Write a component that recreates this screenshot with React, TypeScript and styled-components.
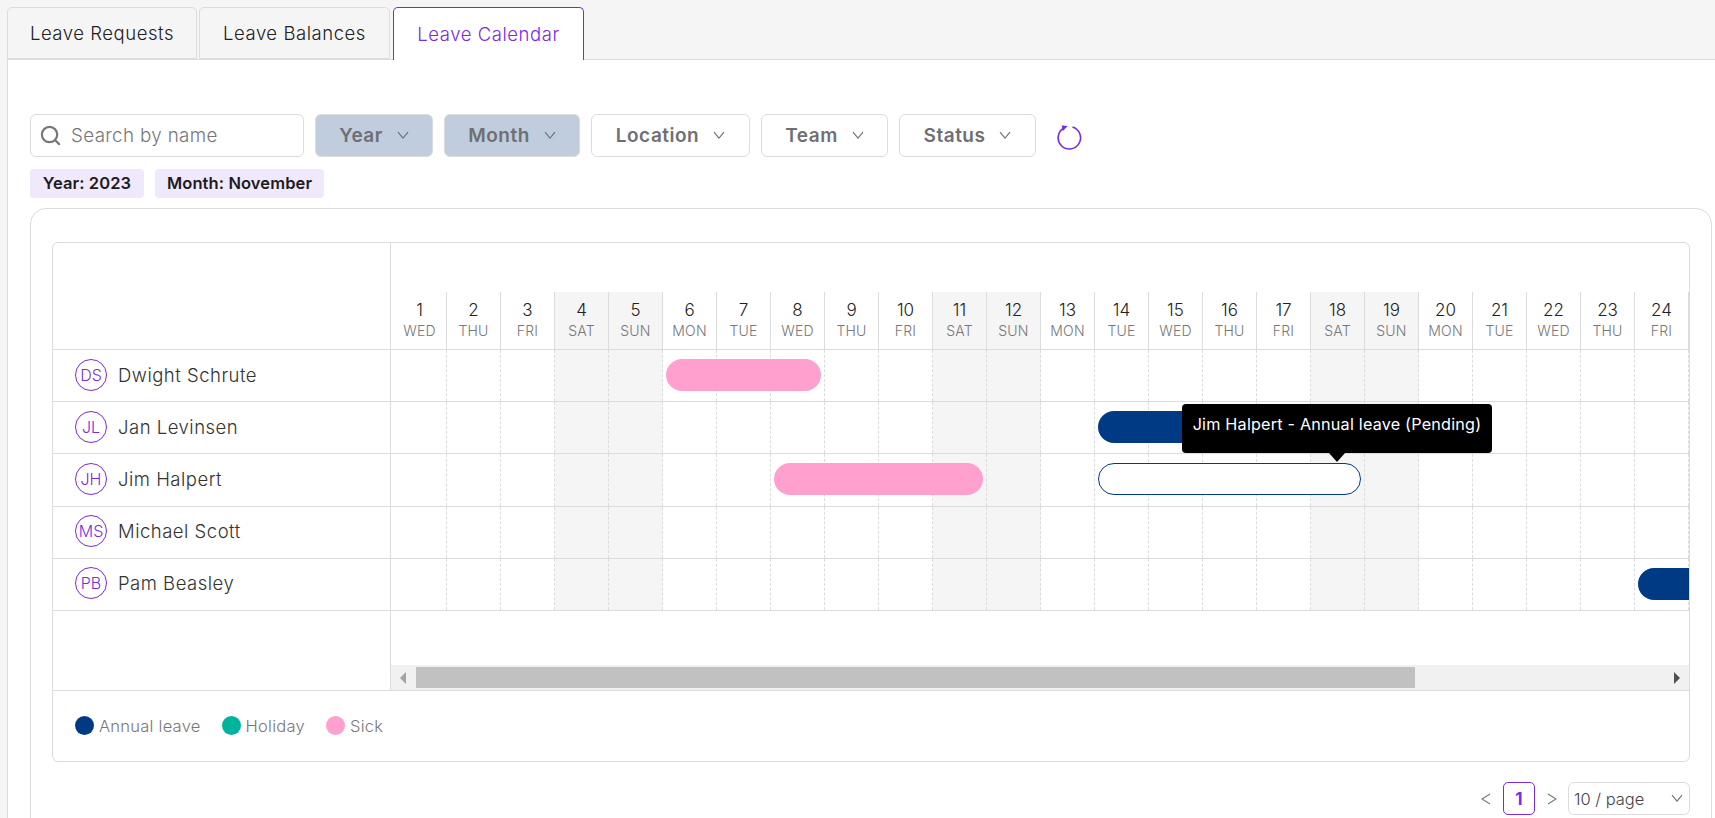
import React from 'react';
import styled, { createGlobalStyle } from 'styled-components';
import { Search } from 'lucide-react';

const PURPLE = '#7a2be0';
const LINE = '#dcdcdf';
const DAY_WIDTH = 54;

const GlobalStyle = createGlobalStyle`
  html, body {
    margin: 0;
    height: 818px;
    overflow: hidden;
    background: #f5f5f5;
    font-family: Inter, "Open Sans", sans-serif;
    color: #333;
  }
  * { box-sizing: border-box; }
`;

const TabBar = styled.div`
  display: flex;
  gap: 2px;
  height: 59px;
  padding: 7px 0 0 7px;
`;

const Tab = styled.div<{ $active?: boolean; $width: number }>`
  width: ${({ $width }) => $width}px;
  margin-left: ${({ $active }) => ($active ? '1px' : '0')};
  display: flex;
  align-items: center;
  justify-content: center;
  font-size: 18.5px;
  font-weight: 300;
  letter-spacing: 0.55px;
  border: 1px solid ${({ $active }) => ($active ? PURPLE : LINE)};
  border-bottom: ${({ $active }) => ($active ? 'none' : `1px solid ${LINE}`)};
  border-radius: 5px 5px 0 0;
  color: ${({ $active }) => ($active ? PURPLE : '#222')};
  background: ${({ $active }) => ($active ? '#fff' : '#f5f5f5')};
  margin-bottom: ${({ $active }) => ($active ? '-1px' : '0')};
  position: relative;
`;

const Panel = styled.div`
  margin-left: 7px;
  height: 759px;
  background: #fff;
  border-top: 1px solid ${LINE};
  border-left: 1px solid ${LINE};
  padding: 54px 3px 0 22px;
  overflow: hidden;
`;

const Filters = styled.div`
  display: flex;
  align-items: stretch;
  height: 43px;
  gap: 11px;
`;

const SearchBox = styled.div`
  width: 274px;
  display: flex;
  align-items: center;
  gap: 9px;
  padding-left: 8px;
  border: 1px solid ${LINE};
  border-radius: 6px;
  font-size: 18.8px;
  font-weight: 300;
  letter-spacing: 0.35px;
  color: #77777a;
`;

const FilterButton = styled.div<{ $width: number; $active?: boolean }>`
  width: ${({ $width }) => $width}px;
  display: flex;
  align-items: center;
  justify-content: center;
  gap: 14px;
  border: 1px solid ${LINE};
  border-radius: 6px;
  font-size: 19px;
  font-weight: 600;
  letter-spacing: 0.5px;
  color: #6f6f73;
  background: ${({ $active }) => ($active ? '#bfcddf' : '#fff')};
`;

const RefreshButton = styled.svg`
  margin: 10px 0 0 9px;
  width: 26px;
  height: 26px;
`;

const Chips = styled.div`
  display: flex;
  gap: 11px;
  margin-top: 12px;
`;

const Chip = styled.div<{ $width: number }>`
  width: ${({ $width }) => $width}px;
  height: 29px;
  display: flex;
  align-items: center;
  justify-content: center;
  padding-bottom: 1px;
  background: #f0e8fb;
  border-radius: 4px;
  font-size: 16.5px;
  font-weight: 600;
  letter-spacing: 0.1px;
  color: #1c1c1e;
`;

const OuterCard = styled.div`
  margin-top: 10px;
  height: 700px;
  padding: 33px 21px 0;
  border: 1px solid ${LINE};
  border-radius: 16px;
`;

const Table = styled.div`
  height: 520px;
  display: flex;
  flex-direction: column;
  border: 1px solid ${LINE};
  border-radius: 6px;
`;

const TableBody = styled.div`
  display: flex;
  height: 448px;
  border-bottom: 1px solid ${LINE};
`;

const NameColumn = styled.div`
  width: 338px;
  flex-shrink: 0;
  border-right: 1px solid ${LINE};
`;

const NameHeader = styled.div`
  height: 107px;
  border-bottom: 1px solid ${LINE};
`;

const NameRow = styled.div`
  height: 52.2px;
  display: flex;
  align-items: center;
  gap: 11px;
  padding: 0 0 2px 22px;
  border-bottom: 1px solid ${LINE};
  font-size: 18.5px;
  font-weight: 300;
  letter-spacing: 0.5px;
  color: #333;
`;

const Avatar = styled.div`
  width: 32px;
  height: 32px;
  display: flex;
  align-items: center;
  justify-content: center;
  border: 1px solid ${PURPLE};
  border-radius: 50%;
  font-size: 16px;
  font-weight: 300;
  letter-spacing: 0;
  color: ${PURPLE};
`;

const Calendar = styled.div`
  flex: 1;
  min-width: 0;
  display: flex;
  flex-direction: column;
  overflow: hidden;
`;

const DaysHeader = styled.div`
  display: grid;
  grid-template-columns: repeat(30, ${DAY_WIDTH}px);
  height: 107px;
  width: max-content;
  min-width: 100%;
  padding: 49px 0 0 2px;
  border-bottom: 1px solid ${LINE};
`;

const DayCell = styled.div<{ $weekend: boolean }>`
  display: flex;
  flex-direction: column;
  align-items: center;
  padding-top: 7px;
  background: ${({ $weekend }) => ($weekend ? '#f5f5f5' : 'transparent')};
  border-right: 1px solid ${LINE};
`;

const DayNumber = styled.span`
  font-size: 17px;
  font-weight: 300;
  line-height: 22px;
  color: #222;
`;

const DayName = styled.span`
  margin-top: 1px;
  font-size: 14px;
  font-weight: 300;
  line-height: 17px;
  letter-spacing: 0.2px;
  color: #77777a;
`;

const CalendarRow = styled.div`
  display: grid;
  grid-template-columns: repeat(30, ${DAY_WIDTH}px);
  grid-template-rows: 51.2px;
  height: 52.2px;
  width: max-content;
  padding-left: 2px;
  border-bottom: 1px solid ${LINE};
`;

const RowCell = styled.div<{ $day: number; $weekend: boolean }>`
  grid-column: ${({ $day }) => $day};
  grid-row: 1;
  background: ${({ $weekend }) => ($weekend ? '#f5f5f5' : 'transparent')};
  border-right: 1px dashed ${LINE};
`;

const LeaveBar = styled.div<{ $from: number; $to: number; $color: string; $pending?: boolean }>`
  grid-column: ${({ $from, $to }) => `${$from} / ${$to + 1}`};
  grid-row: 1;
  align-self: center;
  height: 32px;
  margin: 0 4px 1px 3px;
  border-radius: 16px;
  background: ${({ $color, $pending }) => ($pending ? '#fff' : $color)};
  border: ${({ $color, $pending }) => ($pending ? `1px solid ${$color}` : 'none')};
`;

const ScrollSpacer = styled.div`
  flex: 1;
`;

const ScrollBar = styled.div`
  height: 25px;
  flex-shrink: 0;
  display: flex;
  align-items: center;
  background: #f1f1f1;
  padding: 0 9px 0 9px;
`;

const ScrollArrow = styled.div<{ $dir: 'left' | 'right' }>`
  width: 0;
  height: 0;
  border-top: 6px solid transparent;
  border-bottom: 6px solid transparent;
  ${({ $dir }) =>
    $dir === 'left' ? 'border-right: 6px solid #a3a3a3;' : 'border-left: 6px solid #505050; margin-left: auto;'}
`;

const ScrollThumb = styled.div`
  width: 999px;
  height: 21px;
  margin-left: 10px;
  background: #c1c1c1;
`;

const Legend = styled.div`
  flex: 1;
  display: flex;
  align-items: center;
  gap: 21px;
  padding: 0 0 1px 22px;
`;

const LegendItem = styled.div`
  display: flex;
  align-items: center;
  gap: 5px;
  font-size: 16.5px;
  font-weight: 300;
  letter-spacing: 0.25px;
  color: #77777a;
`;

const LegendDot = styled.span<{ $color: string }>`
  width: 19px;
  height: 19px;
  border-radius: 50%;
  background: ${({ $color }) => $color};
`;

const Pagination = styled.div`
  display: flex;
  align-items: center;
  justify-content: flex-end;
  gap: 12px;
  height: 33px;
  margin-top: 20px;
`;

const PageArrow = styled.svg`
  width: 10px;
  height: 14px;
`;

const PageNumber = styled.div`
  width: 32px;
  height: 33px;
  display: flex;
  align-items: center;
  justify-content: center;
  border: 1px solid ${PURPLE};
  border-radius: 5px;
  font-size: 17px;
  font-weight: 700;
  color: ${PURPLE};
`;

const PageSize = styled.div`
  width: 122px;
  height: 33px;
  margin-left: -1px;
  display: flex;
  align-items: center;
  justify-content: space-between;
  padding: 0 6px 0 5px;
  border: 1px solid ${LINE};
  border-radius: 6px;
  font-size: 16.5px;
  font-weight: 300;
  color: #444;
`;

const Tooltip = styled.div`
  position: absolute;
  left: 1182px;
  top: 404px;
  width: 310px;
  height: 49px;
  padding-top: 10px;
  text-align: center;
  background: #000;
  border-radius: 4px;
  font-size: 16.2px;
  font-weight: 400;
  line-height: 20px;
  letter-spacing: 0.2px;
  color: #fff;
  white-space: nowrap;

  &::after {
    content: '';
    position: absolute;
    left: 147px;
    top: 100%;
    border-left: 8px solid transparent;
    border-right: 8px solid transparent;
    border-top: 9px solid #000;
  }
`;

const Chevron = ({ size = 12 }: { size?: number }) => (
  <svg width={size} height={size * 0.7} viewBox="0 0 12 8" fill="none" stroke="#6f6f73" strokeWidth="1.1">
    <path d="M1 1l5 6 5-6" />
  </svg>
);

const WEEK = ['WED', 'THU', 'FRI', 'SAT', 'SUN', 'MON', 'TUE'];
const days = Array.from({ length: 30 }, (_, i) => ({
  day: i + 1,
  name: WEEK[i % 7],
  weekend: i % 7 === 3 || i % 7 === 4,
}));
const visibleDays = days.slice(0, 24);

const BLUE = '#003a85';
const TEAL = '#00b39b';
const PINK = '#ffa0cf';

const people = [
  { initials: 'DS', name: 'Dwight Schrute', bars: [{ from: 6, to: 8, color: PINK }] },
  { initials: 'JL', name: 'Jan Levinsen', bars: [{ from: 14, to: 16, color: BLUE }] },
  {
    initials: 'JH',
    name: 'Jim Halpert',
    bars: [
      { from: 8, to: 11, color: PINK },
      { from: 14, to: 18, color: BLUE, pending: true },
    ],
  },
  { initials: 'MS', name: 'Michael Scott', bars: [] },
  { initials: 'PB', name: 'Pam Beasley', bars: [{ from: 24, to: 28, color: BLUE }] },
];

export default function App() {
  return (
    <>
      <GlobalStyle />
      <TabBar>
        <Tab $width={190}>Leave Requests</Tab>
        <Tab $width={191}>Leave Balances</Tab>
        <Tab $width={191} $active>Leave Calendar</Tab>
      </TabBar>
      <Panel>
        <Filters>
          <SearchBox>
            <Search size={23} color="#77777a" strokeWidth={2.3} />
            Search by name
          </SearchBox>
          <FilterButton $width={118} $active>Year <Chevron /></FilterButton>
          <FilterButton $width={136} $active>Month <Chevron /></FilterButton>
          <FilterButton $width={159}>Location <Chevron /></FilterButton>
          <FilterButton $width={127}>Team <Chevron /></FilterButton>
          <FilterButton $width={137}>Status <Chevron /></FilterButton>
          <RefreshButton viewBox="0 0 26 26" fill="none">
            <path d="M16.5 3.1A11.2 11.2 0 1 1 8 4" stroke={PURPLE} strokeWidth="1.6" />
            <path d="M5.6 1.6l6 .4-4.6 5z" fill={PURPLE} />
          </RefreshButton>
        </Filters>
        <Chips>
          <Chip $width={114}>Year: 2023</Chip>
          <Chip $width={169}>Month: November</Chip>
        </Chips>
        <OuterCard>
          <Table>
            <TableBody>
              <NameColumn>
                <NameHeader />
                {people.map(p => (
                  <NameRow key={p.initials}>
                    <Avatar>{p.initials}</Avatar>
                    {p.name}
                  </NameRow>
                ))}
              </NameColumn>
              <Calendar>
                <DaysHeader>
                  {visibleDays.map(d => (
                    <DayCell key={d.day} $weekend={d.weekend}>
                      <DayNumber>{d.day}</DayNumber>
                      <DayName>{d.name}</DayName>
                    </DayCell>
                  ))}
                </DaysHeader>
                {people.map(p => (
                  <CalendarRow key={p.initials}>
                    {days.map(d => (
                      <RowCell key={d.day} $day={d.day} $weekend={d.weekend} />
                    ))}
                    {p.bars.map((b, i) => (
                      <LeaveBar key={i} $from={b.from} $to={b.to} $color={b.color} $pending={'pending' in b} />
                    ))}
                  </CalendarRow>
                ))}
                <ScrollSpacer />
                <ScrollBar>
                  <ScrollArrow $dir="left" />
                  <ScrollThumb />
                  <ScrollArrow $dir="right" />
                </ScrollBar>
              </Calendar>
            </TableBody>
            <Legend>
              <LegendItem><LegendDot $color={BLUE} />Annual leave</LegendItem>
              <LegendItem><LegendDot $color={TEAL} />Holiday</LegendItem>
              <LegendItem><LegendDot $color={PINK} />Sick</LegendItem>
            </Legend>
          </Table>
          <Pagination>
            <PageArrow viewBox="0 0 10 14" fill="none" stroke="#77777a" strokeWidth="1.2">
              <path d="M9 2L1 7l8 5" />
            </PageArrow>
            <PageNumber>1</PageNumber>
            <PageArrow viewBox="0 0 10 14" fill="none" stroke="#77777a" strokeWidth="1.2">
              <path d="M1 2l8 5-8 5" />
            </PageArrow>
            <PageSize>10 / page <Chevron /></PageSize>
          </Pagination>
        </OuterCard>
      </Panel>
      <Tooltip>Jim Halpert - Annual leave (Pending)</Tooltip>
    </>
  );
}
